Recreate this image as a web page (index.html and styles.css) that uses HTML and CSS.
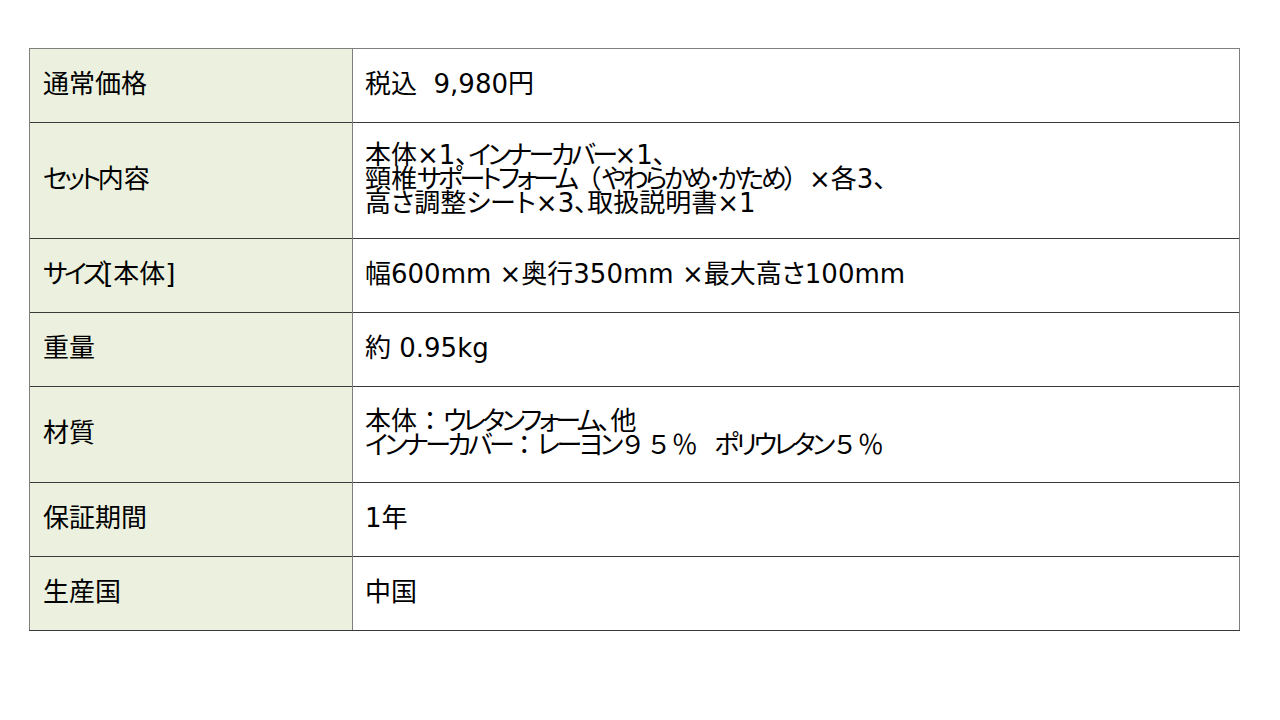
FILE: index.html
```html
<!DOCTYPE html>
<html lang="ja">
<head>
<meta charset="utf-8">
<link rel="stylesheet" href="styles.css">
</head>
<body>
<div class="page">
<table class="spec">
  <tr class="r74"><th>通常価格</th><td>税込&nbsp;&nbsp;9,980円</td></tr>
  <tr class="r116"><th><span class="kn">セット</span>内容</th><td>本体×1、<span class="kn">インナーカバー</span>×1、<br>頸椎<span class="kn">サポートフォーム</span><span class="fw">（</span><span class="kn">やわらかめ･かため</span><span class="fw">）</span>×各3、<br>高さ調整シート×3、取扱説明書×1</td></tr>
  <tr class="r74"><th><span class="kn">サイズ</span>[本体]</th><td>幅600mm ×奥行350mm ×最大高さ100mm</td></tr>
  <tr class="r74"><th>重量</th><td>約 0.95kg</td></tr>
  <tr class="r96"><th>材質</th><td>本体<span class="fw">：</span><span class="kn">ウレタンフォーム</span>、他<br><span class="kn">インナーカバー</span><span class="fw">：</span><span class="kn">レーヨン</span><span class="fw">９５％</span>&nbsp;&nbsp;<span class="kn">ポリウレタン</span><span class="fw">５％</span></td></tr>
  <tr class="r74"><th>保証期間</th><td>1年</td></tr>
  <tr class="r74 last"><th>生産国</th><td>中国</td></tr>
</table>
</div>
</body>
</html>
```

FILE: styles.css
```css
html, body {
  margin: 0;
  padding: 0;
  background: #ffffff;
}
.page {
  width: 1280px;
  height: 720px;
  padding: 48px 0 0 29px;
  box-sizing: border-box;
}
.spec {
  border-collapse: collapse;
  width: 1211px;
  font-family: "DejaVu Sans", "Noto Sans CJK JP", sans-serif;
  font-size: 26px;
  line-height: 24px;
  color: #000;
  font-feature-settings: "palt" 1;
}
.fw {
  font-feature-settings: normal;
}
.kn {
  letter-spacing: -3.5px;
}
.spec th, .spec td {
  border-top: 1px solid #3a3a3a;
  border-left: 1px solid #7f7f7f;
  border-right: 1px solid #7f7f7f;
  vertical-align: middle;
  text-align: left;
  font-weight: normal;
  padding: 0 0 4px 13px;
}
.spec tr:first-child th, .spec tr:first-child td {
  border-top: 1px solid #808080;
}
.spec tr.last th, .spec tr.last td {
  border-bottom: 1px solid #3a3a3a;
}
.spec th {
  width: 309px;
  background: #ebf1de;
  padding-left: 13px;
}
.spec td {
  background: #ffffff;
  padding-left: 12px;
}
.r74 { height: 74px; }
.r116 { height: 116px; }
.r96 { height: 96px; }
```
